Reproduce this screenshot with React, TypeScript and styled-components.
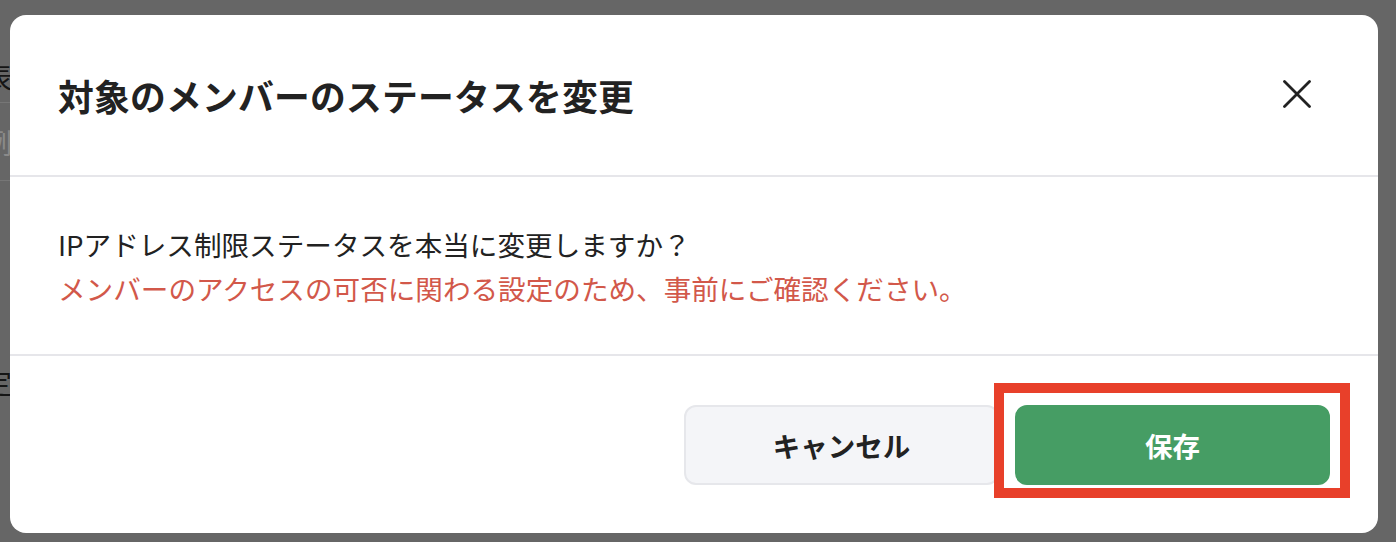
import React from "react";
import styled, { createGlobalStyle } from "styled-components";

const GlobalStyle = createGlobalStyle`
  html, body {
    margin: 0;
    padding: 0;
    background: #666666;
  }
  body {
    font-family: "Noto Sans CJK JP", "Noto Sans", sans-serif;
  }
  * { box-sizing: border-box; }
`;

const Page = styled.div`
  position: relative;
  width: 1396px;
  height: 542px;
  overflow: hidden;
  background: #666666;
`;

const BehindContent = styled.div`
  display: flex;
  flex-direction: column;
  margin-left: -16px;
  padding-top: 50px;
  width: 300px;
`;

const BehindRow = styled.div<{ $tone: "dark" | "light"; $h: number; $line?: boolean }>`
  height: ${(p) => p.$h}px;
  display: flex;
  align-items: center;
  font-size: 28px;
  color: ${(p) => (p.$tone === "dark" ? "#151515" : "#8a8a8a")};
  border-bottom: ${(p) => (p.$line ? "1px solid #767676" : "none")};
`;

const Overlay = styled.div`
  position: absolute;
  inset: 0;
  padding: 15px 18px 9px 10px;
  display: flex;
`;

const Modal = styled.div`
  width: 1368px;
  height: 518px;
  background: #ffffff;
  border-radius: 16px;
  display: flex;
  flex-direction: column;
`;

const Header = styled.div`
  height: 162px;
  padding: 0 48px;
  display: flex;
  align-items: center;
  justify-content: space-between;
  border-bottom: 2px solid #e6e6ea;
`;

const Title = styled.h2`
  margin: 0;
  font-size: 35.8px;
  font-weight: 700;
  color: #222222;
  letter-spacing: 0.2px;
`;

const CloseButton = styled.button`
  width: 66px;
  height: 66px;
  margin-top: -2px;
  border: none;
  background: transparent;
  padding: 0;
  display: flex;
  align-items: center;
  justify-content: center;
  cursor: pointer;
`;

const Body = styled.div`
  height: 179px;
  padding: 0 48px;
  display: flex;
  flex-direction: column;
  justify-content: center;
  border-bottom: 2px solid #e6e6ea;
`;

const Line = styled.p<{ $warn?: boolean }>`
  margin: 0;
  font-size: 27.6px;
  line-height: 44px;
  color: ${(p) => (p.$warn ? "#d2584a" : "#222222")};
`;

const Footer = styled.div`
  flex: 1;
  padding: 0 48px 0 48px;
  display: flex;
  justify-content: flex-end;
  align-items: center;
  gap: 16px;
`;

const Button = styled.button<{ $primary?: boolean }>`
  width: 315px;
  height: 80px;
  border-radius: 12px;
  font-family: "Noto Sans CJK JP", "Noto Sans", sans-serif;
  font-size: 27.5px;
  font-weight: 700;
  cursor: pointer;
  display: flex;
  align-items: center;
  justify-content: center;
  border: 2px solid ${(p) => (p.$primary ? "#469d64" : "#e6e7eb")};
  background: ${(p) => (p.$primary ? "#469d64" : "#f4f5f8")};
  color: ${(p) => (p.$primary ? "#ffffff" : "#222222")};
`;

const Highlight = styled.div`
  position: relative;
  display: flex;
  &::after {
    content: "";
    position: absolute;
    top: -22px;
    bottom: -13px;
    left: -21px;
    right: -20px;
    border: 10px solid #e8402a;
    pointer-events: none;
  }
`;

const CloseIcon = () => (
  <svg width="28" height="28" viewBox="0 0 28 28" fill="none">
    <path
      d="M1.5 1.5 L26.5 26.5 M26.5 1.5 L1.5 26.5"
      stroke="#222222"
      strokeWidth="2.8"
      strokeLinecap="round"
    />
  </svg>
);

export default function App() {
  return (
    <Page>
      <GlobalStyle />
      <BehindContent>
        <BehindRow $tone="dark" $h={53} $line>
          表示
        </BehindRow>
        <BehindRow $tone="light" $h={78} $line>
          例
        </BehindRow>
        <BehindRow $tone="dark" $h={402}>
          定
        </BehindRow>
      </BehindContent>
      <Overlay>
        <Modal role="dialog">
          <Header>
            <Title>対象のメンバーのステータスを変更</Title>
            <CloseButton aria-label="閉じる">
              <CloseIcon />
            </CloseButton>
          </Header>
          <Body>
            <Line>IPアドレス制限ステータスを本当に変更しますか？</Line>
            <Line $warn>
              メンバーのアクセスの可否に関わる設定のため、事前にご確認ください。
            </Line>
          </Body>
          <Footer>
            <Button>キャンセル</Button>
            <Highlight>
              <Button $primary>保存</Button>
            </Highlight>
          </Footer>
        </Modal>
      </Overlay>
    </Page>
  );
}
